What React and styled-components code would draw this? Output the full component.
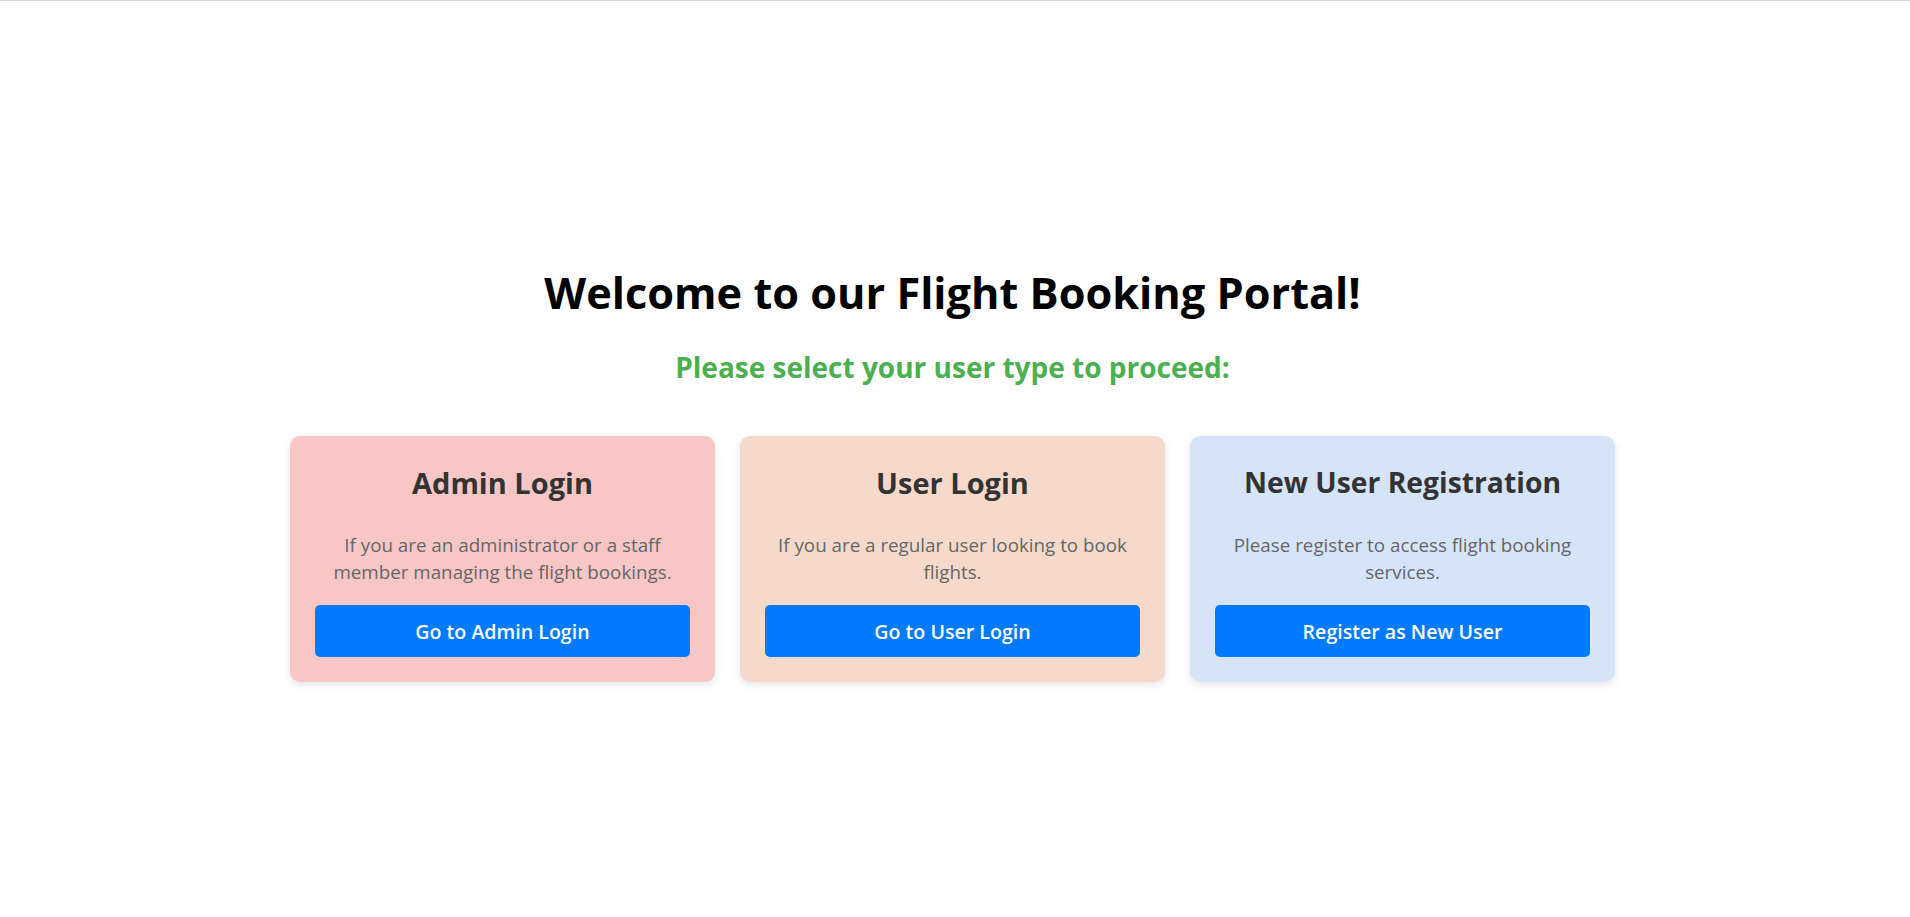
import styled, { createGlobalStyle } from "styled-components";

const GlobalStyle = createGlobalStyle`
  * {
    box-sizing: border-box;
  }
  body {
    margin: 0;
    background: #fff;
    font-family: "Open Sans", "Noto Sans", sans-serif;
    border-top: 1px solid #d6d6d6;
  }
`;

const Page = styled.div`
  min-height: 100vh;
  display: flex;
  flex-direction: column;
  align-items: center;
  padding: 266px 5px 0 0;
  text-align: center;
`;

const Title = styled.h1`
  margin: 0;
  font-size: 43.3px;
  line-height: 52px;
  font-weight: 700;
  color: #000;
`;

const Subtitle = styled.h2`
  margin: 31px 0 0;
  font-size: 28px;
  line-height: 34px;
  font-weight: 700;
  color: #4caf50;
`;

const CardRow = styled.div`
  display: flex;
  gap: 25px;
  margin-top: 52px;
`;

const Card = styled.div`
  width: 425px;
  padding: 29px 25px 25px;
  border-radius: 10px;
  background: ${(p) => p.$bg};
  box-shadow: 0 3px 8px rgba(0, 0, 0, 0.1);
`;

const CardTitle = styled.h3`
  margin: 0;
  font-size: ${(p) => (p.$long ? "28.3px" : "29px")};
  line-height: 35px;
  font-weight: 700;
  color: #333;
`;

const CardText = styled.p`
  margin: 32px 0 19px;
  font-size: 18.8px;
  line-height: 27px;
  color: #666;
`;

const CardButton = styled.button`
  display: block;
  width: 100%;
  height: 52px;
  border: none;
  border-radius: 5px;
  background: #007bff;
  color: #fff;
  font-family: inherit;
  font-size: 19.6px;
  font-weight: 600;
  cursor: pointer;
`;

const options = [
  {
    title: "Admin Login",
    text: "If you are an administrator or a staff member managing the flight bookings.",
    action: "Go to Admin Login",
    bg: "#f8c6c5",
  },
  {
    title: "User Login",
    text: "If you are a regular user looking to book flights.",
    action: "Go to User Login",
    bg: "#f5dacb",
  },
  {
    title: "New User Registration",
    text: "Please register to access flight booking services.",
    action: "Register as New User",
    bg: "#d6e4f9",
    long: true,
  },
];

export default function App() {
  return (
    <>
      <GlobalStyle />
      <Page>
        <Title>Welcome to our Flight Booking Portal!</Title>
        <Subtitle>Please select your user type to proceed:</Subtitle>
        <CardRow>
          {options.map((o) => (
            <Card key={o.title} $bg={o.bg}>
              <CardTitle $long={o.long}>{o.title}</CardTitle>
              <CardText>{o.text}</CardText>
              <CardButton>{o.action}</CardButton>
            </Card>
          ))}
        </CardRow>
      </Page>
    </>
  );
}
